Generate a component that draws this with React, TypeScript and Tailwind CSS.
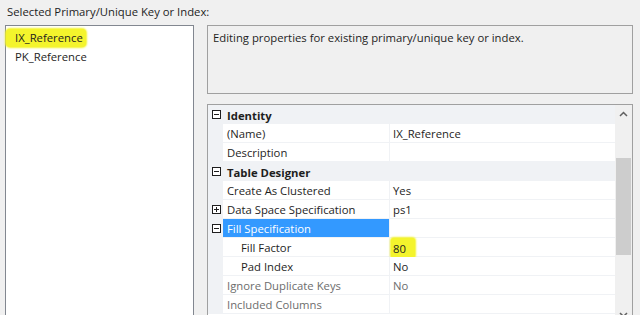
import React from "react";

const font = { fontFamily: '"Segoe UI", "Open Sans", "Noto Sans", sans-serif' };

function Box({ minus }: { minus: boolean }) {
  return (
    <div className="relative w-[9px] h-[9px] border border-[#1e1e1e] bg-white">
      <div className="absolute left-[1px] right-[1px] top-[3px] h-[1px] bg-[#1e1e1e]" />
      {!minus && <div className="absolute top-[1px] bottom-[1px] left-[3px] w-[1px] bg-[#1e1e1e]" />}
    </div>
  );
}

type Row = {
  kind: "cat" | "prop";
  name: string;
  value?: string;
  box?: "minus" | "plus";
  indent?: boolean;
  selected?: boolean;
  disabled?: boolean;
  highlight?: boolean;
};

const rows: Row[] = [
  { kind: "cat", name: "Identity", box: "minus" },
  { kind: "prop", name: "(Name)", value: "IX_Reference" },
  { kind: "prop", name: "Description", value: "" },
  { kind: "cat", name: "Table Designer", box: "minus" },
  { kind: "prop", name: "Create As Clustered", value: "Yes" },
  { kind: "prop", name: "Data Space Specification", value: "ps1", box: "plus" },
  { kind: "prop", name: "Fill Specification", value: "", box: "minus", selected: true },
  { kind: "prop", name: "Fill Factor", value: "80", indent: true, highlight: true },
  { kind: "prop", name: "Pad Index", value: "No", indent: true },
  { kind: "prop", name: "Ignore Duplicate Keys", value: "No", disabled: true },
  { kind: "prop", name: "Included Columns", value: "", disabled: true },
];

function GridRow({ r }: { r: Row }) {
  if (r.kind === "cat") {
    return (
      <div className="flex h-[19px] bg-[#f0f2f5]">
        <div className="w-[15px] flex items-center justify-center pl-[2px]">
          <Box minus />
        </div>
        <div className="pl-[4px] font-bold text-[#1e1e1e] leading-[21px]">{r.name}</div>
      </div>
    );
  }
  return (
    <div className="flex h-[19px] bg-[#f0f2f5]">
      <div className="w-[15px] flex items-center justify-center pl-[2px]">
        {r.box && <Box minus={r.box === "minus"} />}
      </div>
      <div
        className={`w-[166px] h-[18px] leading-[20px] whitespace-nowrap overflow-hidden ${
          r.selected ? "bg-[#3399ff] text-white" : "bg-white"
        } ${r.disabled ? "text-[#6d6d6d]" : r.selected ? "" : "text-[#1e1e1e]"} ${
          r.indent ? "pl-[18px]" : "pl-[4px]"
        }`}
      >
        {r.name}
      </div>
      <div
        className={`ml-[1px] flex-1 h-[18px] leading-[20px] bg-white pl-[3px] whitespace-nowrap ${
          r.disabled ? "text-[#6d6d6d]" : "text-[#1e1e1e]"
        }`}
      >
        {r.highlight ? (
          <span className="inline-block bg-[#f4f42c] rounded-[3px] px-[2px] -ml-[2px] h-[20px] leading-[22px] w-[24px] shadow-[0_0_2px_1px_#f4f42c]">
            {r.value}
          </span>
        ) : (
          r.value
        )}
      </div>
    </div>
  );
}

export default function App() {
  return (
    <div className="w-[640px] h-[315px] bg-[#f0f0f0] overflow-hidden text-[11.3px] text-[#1e1e1e]" style={font}>
      <div className="h-[25px] pl-[7px] leading-[24px]">Selected Primary/Unique Key or Index:</div>
      <div className="flex pl-[5px]">
        <div className="w-[189px] h-[300px] border border-[#828790] bg-white pt-[2px]">
          <div className="h-[19px] leading-[20px] pl-[9px] relative">
            <span className="absolute left-0 top-[1px] w-[80px] h-[18px] bg-[#f4f42c] rounded-[4px] shadow-[0_0_2px_1px_#f4f42c]" />
            <span className="relative">IX_Reference</span>
          </div>
          <div className="h-[19px] leading-[20px] pl-[9px]">PK_Reference</div>
        </div>
        <div className="ml-[13px] w-[426px] flex flex-col">
          <div className="h-[69px] border border-[#a0a0a0] bg-[#f0f0f0] pl-[5px] pt-[3px] leading-[18px]">
            Editing properties for existing primary/unique key or index.
          </div>
          <div className="mt-[10px] h-[220px] border border-[#a0a0a0] bg-white flex">
            <div className="flex-1 flex flex-col">
              {rows.map((r, i) => (
                <GridRow key={i} r={r} />
              ))}
            </div>
            <div className="w-[17px] bg-[#f0f0f0] flex flex-col items-center">
              <div className="h-[17px] w-full flex items-center justify-center">
                <svg width="9" height="6" viewBox="0 0 9 6">
                  <path d="M1 5 L4.5 1.5 L8 5" fill="none" stroke="#606060" strokeWidth="1.5" />
                </svg>
              </div>
              <div className="mt-[36px] w-[15px] h-[97px] bg-[#cdcdcd]" />
              <div className="flex-1" />
              <div className="h-[17px] w-full flex items-center justify-center">
                <svg width="9" height="6" viewBox="0 0 9 6">
                  <path d="M1 1 L4.5 4.5 L8 1" fill="none" stroke="#606060" strokeWidth="1.5" />
                </svg>
              </div>
            </div>
          </div>
        </div>
      </div>
    </div>
  );
}
